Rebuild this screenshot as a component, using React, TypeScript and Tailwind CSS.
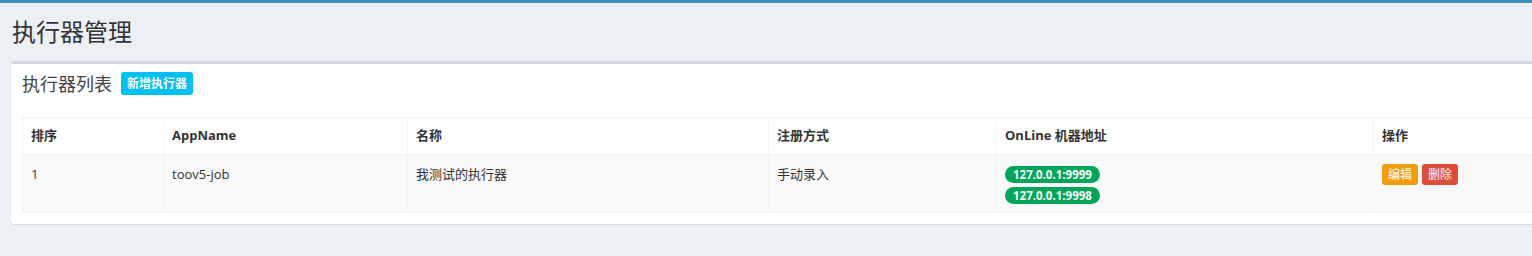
import React from 'react';

interface Executor {
    order: number;
    appName: string;
    title: string;
    addressType: string;
    addresses: string[];
}

const executors: Executor[] = [
    {
        order: 1,
        appName: 'toov5-job',
        title: '我测试的执行器',
        addressType: '手动录入',
        addresses: ['127.0.0.1:9999', '127.0.0.1:9998'],
    },
];

const font = { fontFamily: '"Open Sans", "Noto Sans CJK SC", sans-serif' };

const App: React.FC = () => {
    return (
        <div
            className="w-[1532px] h-[256px] overflow-hidden bg-[#ecf0f5] text-[#333] border-t-[3px] border-[#3c8dbc]"
            style={font}
        >
            <h1 className="pl-[12px] pt-[14px] text-[24px] leading-[30px] text-[#333] font-normal">执行器管理</h1>

            <div className="ml-[11px] mt-[14px] w-[1540px] bg-white border-t-[3px] border-[#d2d6de] rounded-[3px] shadow-[0_1px_1px_rgba(0,0,0,0.1)]">
                <div className="flex items-center px-[11px] pt-[8px] pb-[10px]">
                    <h3 className="text-[18px] leading-[22px] text-[#444]">执行器列表</h3>
                    <button className="ml-[9px] h-[23px] px-[6px] rounded-[3px] bg-[#00c0ef] text-white text-[12px] font-bold leading-[23px]">
                        新增执行器
                    </button>
                </div>

                <div className="px-[11px] pt-[12px] pb-[11px]">
                    <table className="w-full border-collapse text-[13px] border border-[#f4f4f4]">
                        <thead>
                            <tr className="h-[37px] text-left">
                                <th className="w-[141px] px-[8px] border border-[#f4f4f4] font-bold">排序</th>
                                <th className="w-[244px] px-[8px] border border-[#f4f4f4] font-bold">AppName</th>
                                <th className="w-[361px] px-[8px] border border-[#f4f4f4] font-bold">名称</th>
                                <th className="w-[228px] px-[8px] border border-[#f4f4f4] font-bold">注册方式</th>
                                <th className="w-[377px] px-[8px] border border-[#f4f4f4] font-bold">OnLine 机器地址</th>
                                <th className="px-[8px] border border-[#f4f4f4] font-bold">操作</th>
                            </tr>
                        </thead>
                        <tbody>
                            {executors.map(ex => (
                                <tr key={ex.order} className="bg-[#f9f9f9] align-top">
                                    <td className="px-[8px] pt-[9px] pb-[8px] leading-[20px] border border-[#f4f4f4]">{ex.order}</td>
                                    <td className="px-[8px] pt-[9px] pb-[8px] leading-[20px] border border-[#f4f4f4]">{ex.appName}</td>
                                    <td className="px-[8px] pt-[9px] pb-[8px] leading-[20px] border border-[#f4f4f4]">{ex.title}</td>
                                    <td className="px-[8px] pt-[9px] pb-[8px] leading-[20px] border border-[#f4f4f4]">{ex.addressType}</td>
                                    <td className="px-[8px] pt-[11px] pb-[8px] border border-[#f4f4f4]">
                                        <div className="flex flex-col items-start gap-[4px]">
                                            {ex.addresses.map(addr => (
                                                <span
                                                    key={addr}
                                                    className="h-[17px] px-[8px] rounded-full bg-[#00a65a] text-white text-[11.5px] font-bold leading-[17px]"
                                                >
                                                    {addr}
                                                </span>
                                            ))}
                                        </div>
                                    </td>
                                    <td className="px-[8px] pt-[9px] pb-[8px] border border-[#f4f4f4]">
                                        <div className="flex gap-[4px]">
                                            <button className="h-[21px] px-[6px] rounded-[3px] bg-[#f39c12] text-white text-[12px] leading-[21px]">编辑</button>
                                            <button className="h-[21px] px-[6px] rounded-[3px] bg-[#dd4b39] text-white text-[12px] leading-[21px]">删除</button>
                                        </div>
                                    </td>
                                </tr>
                            ))}
                        </tbody>
                    </table>
                </div>
            </div>
        </div>
    );
};

export default App;
